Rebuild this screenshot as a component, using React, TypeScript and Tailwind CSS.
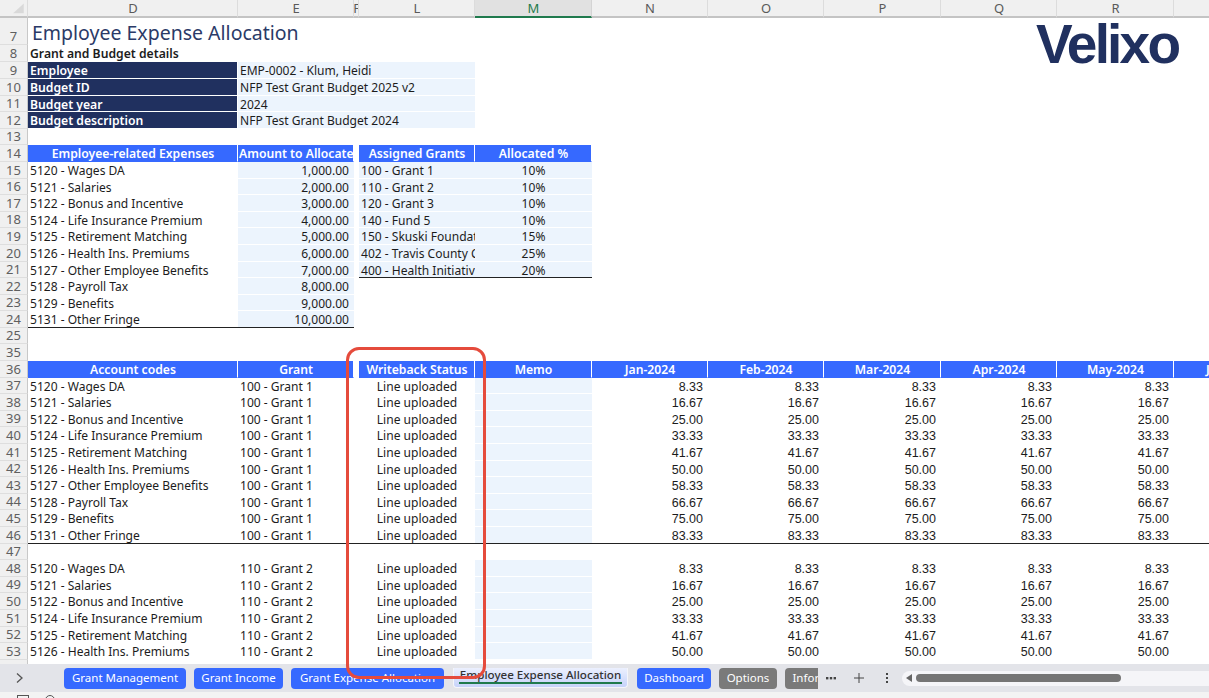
import React from "react";

const sans = "font-['Noto_Sans',sans-serif]";
const cols = { D: "w-[210px]", E: "w-[116px]", F: "w-[5px]", L: "w-[116px]", M: "w-[117px]" };
const nums = ["w-[116px]", "w-[116px]", "w-[117px]", "w-[116px]", "w-[117px]"];

function Row({ n, h = "h-[16.6px]", children }: { n?: string; h?: string; children?: React.ReactNode }) {
  return (
    <div className={`flex shrink-0 ${h}`}>
      <div className="w-[28px] shrink-0 bg-[#f0f0f0] border-r border-b border-r-[#c8c8c8] border-b-[#dedede] flex items-end justify-center text-[13px] leading-[15px] text-[#5f5f5f]">
        {n}
      </div>
      {children}
    </div>
  );
}

function C({ w, pad = "pl-[2px] pr-[2px]", line = "border-transparent", v = "pt-[2px] leading-[13.6px]", className = "", children }: { w: string; pad?: string; line?: string; v?: string; className?: string; children?: React.ReactNode }) {
  return (
    <div className={`${w} shrink-0 overflow-x-clip whitespace-nowrap border-b ${v} ${pad} ${line} ${className}`}>
      {children != null && <span className="relative z-10">{children}</span>}
    </div>
  );
}

const DARK = "border-[#222222]";
const WHITE = "border-white";
const BLUE = "border-[#3669ff]";
const navy = "bg-[#20305f] text-white font-semibold text-[12.2px]";
const light = "bg-[#ecf4fd]";
const blue = "bg-[#3669ff] text-white font-semibold text-[12.2px] text-center border-r border-r-white";
const bluePad = "pl-[1px] pr-0";

const expenses = [
  "5120 - Wages DA",
  "5121 - Salaries",
  "5122 - Bonus and Incentive",
  "5124 - Life Insurance Premium",
  "5125 - Retirement Matching",
  "5126 - Health Ins. Premiums",
  "5127 - Other Employee Benefits",
  "5128 - Payroll Tax",
  "5129 - Benefits",
  "5131 - Other Fringe",
];
const amounts = ["1,000.00", "2,000.00", "3,000.00", "4,000.00", "5,000.00", "6,000.00", "7,000.00", "8,000.00", "9,000.00", "10,000.00"];
const grants = [
  ["100 - Grant 1", "10%"],
  ["110 - Grant 2", "10%"],
  ["120 - Grant 3", "10%"],
  ["140 - Fund 5", "10%"],
  ["150 - Skuski Foundat", "15%"],
  ["402 - Travis County C", "25%"],
  ["400 - Health Initiativ", "20%"],
];
const values = ["8.33", "16.67", "25.00", "33.33", "41.67", "50.00", "58.33", "66.67", "75.00", "83.33"];
const months = ["Jan-2024", "Feb-2024", "Mar-2024", "Apr-2024", "May-2024"];

function ColHead({ w, label, active }: { w: string; label: string; active?: boolean }) {
  return (
    <div
      className={`${w} shrink-0 overflow-hidden flex items-center justify-center pl-[1px] text-[13px] leading-[15px] border-r border-b-2 ${
        active ? "bg-[#e1e1e1] border-r-[#d4d4d4] border-b-[#1f7a4d] text-[#1f7a4d]" : "border-r-[#dcdcdc] border-b-[#c4c4c4] text-[#5a5a5a]"
      }`}
    >
      {label}
    </div>
  );
}

function DetailRow({ n, label, value }: { n: string; label: string; value: string }) {
  return (
    <Row n={n}>
      <C w={cols.D} line={WHITE} className={`${navy} border-r border-r-white`}>{label}</C>
      <C w="w-[237px]" line={WHITE} className={light}>{value}</C>
    </Row>
  );
}

function LineRow({ n, name, grant, i, end }: { n: number; name: string; grant: string; i: number; end?: boolean }) {
  const rule = end ? DARK : "border-transparent";
  return (
    <Row n={String(n)}>
      <C w={cols.D} line={rule}>{name}</C>
      <C w={cols.E} line={rule}>{grant}</C>
      <C w={cols.F} line={rule} />
      <C w={cols.L} line={rule} className="text-center">Line uploaded</C>
      <C w={cols.M} line={end ? DARK : WHITE} className={light} />
      {nums.map((w, k) => (
        <C key={k} w={w} line={rule} pad="pl-[2px] pr-[5px]" v="pt-[3px] leading-[12.6px]" className="text-right text-[12.5px] font-['Liberation_Sans',sans-serif]">{values[i]}</C>
      ))}
      <C w="flex-1" line={rule} />
    </Row>
  );
}

function Tab({ label, tone = "blue", w, className = "" }: { label: string; tone?: "blue" | "gray"; w: string; className?: string }) {
  return (
    <div
      className={`${w} h-[21px] shrink-0 rounded-[4px] flex items-center justify-center overflow-hidden whitespace-nowrap text-[11.5px] leading-[14px] text-white ${
        tone === "blue" ? "bg-[#3669ff]" : "bg-[#7a7a7a]"
      } ${className}`}
    >
      {label}
    </div>
  );
}

export default function App() {
  return (
    <div className={`relative w-[1209px] h-[698px] overflow-hidden bg-white flex flex-col text-[12.05px] text-[#1c1c1c] ${sans}`}>
      {/* column letters */}
      <div className="flex h-[18px] shrink-0 bg-[#f0f0f0]">
        <div className="w-[28px] shrink-0 border-r border-b-2 border-r-[#dcdcdc] border-b-[#c4c4c4]">
          <svg viewBox="0 0 28 18" className="w-[28px] h-[16px]">
            <polygon points="13,15 25,15 25,4" fill="#d9d9d9" />
          </svg>
        </div>
        <ColHead w={cols.D} label="D" />
        <ColHead w={cols.E} label="E" />
        <ColHead w={cols.F} label="F" />
        <ColHead w={cols.L} label="L" />
        <ColHead w={cols.M} label="M" active />
        <ColHead w={nums[0]} label="N" />
        <ColHead w={nums[1]} label="O" />
        <ColHead w={nums[2]} label="P" />
        <ColHead w={nums[3]} label="Q" />
        <ColHead w={nums[4]} label="R" />
        <div className="flex-1 border-b-2 border-b-[#c4c4c4]" />
      </div>

      {/* sheet rows */}
      <div className="flex-1 min-h-0 overflow-hidden flex flex-col">
        <Row n="7" h="h-[27px]">
          <div className="px-[4px] pt-[2px] text-[19.5px] leading-[25px] text-[#2b3a67] whitespace-nowrap">Employee Expense Allocation</div>
        </Row>
        <Row n="8" h="h-[17.4px]">
          <C w={cols.D} className="font-semibold text-[12.2px]">Grant and Budget details</C>
        </Row>
        <DetailRow n="9" label="Employee" value="EMP-0002 - Klum, Heidi" />
        <DetailRow n="10" label="Budget ID" value="NFP Test Grant Budget 2025 v2" />
        <DetailRow n="11" label="Budget year" value="2024" />
        <DetailRow n="12" label="Budget description" value="NFP Test Grant Budget 2024" />
        <Row n="13" />
        <Row n="14">
          <C w={cols.D} pad={bluePad} line={BLUE} className={blue}>Employee-related Expenses</C>
          <C w={cols.E} pad={bluePad} line={BLUE} className={blue}>Amount to Allocate</C>
          <C w={cols.F} />
          <C w={cols.L} pad={bluePad} line={BLUE} className={blue}>Assigned Grants</C>
          <C w={cols.M} pad={bluePad} line={BLUE} className={blue}>Allocated %</C>
        </Row>
        {expenses.map((name, i) => {
          const g = grants[i];
          const lastE = i === 9;
          const lastG = i === 6;
          return (
            <Row key={name} n={String(15 + i)}>
              <C w={cols.D} line={lastE ? DARK : "border-transparent"}>{name}</C>
              <C w={cols.E} pad="pl-[2px] pr-[5px]" line={lastE ? DARK : WHITE} className={`${light} text-right`}>{amounts[i]}</C>
              <C w={cols.F} />
              {g && (
                <>
                  <C w={cols.L} line={lastG ? DARK : WHITE} className={light}>{g[0]}</C>
                  <C w={cols.M} line={lastG ? DARK : WHITE} className={`${light} text-center`}>{g[1]}</C>
                </>
              )}
            </Row>
          );
        })}
        <Row n="25" />
        <Row n="35" />
        <Row n="36">
          <C w={cols.D} pad={bluePad} line={BLUE} className={blue}>Account codes</C>
          <C w={cols.E} pad={bluePad} line={BLUE} className={blue}>Grant</C>
          <C w={cols.F} />
          <C w={cols.L} pad={bluePad} line={BLUE} className={blue}>Writeback Status</C>
          <C w={cols.M} pad={bluePad} line={BLUE} className={blue}>Memo</C>
          {months.map((m, k) => (
            <C key={m} w={nums[k]} pad={bluePad} line={BLUE} className={blue}>{m}</C>
          ))}
          <C w="flex-1" pad="pl-[32px] pr-0" line={BLUE} className="bg-[#3669ff] text-white font-semibold text-[12.2px]">Jun-2024</C>
        </Row>
        {expenses.map((name, i) => (
          <LineRow key={name} n={37 + i} name={name} grant="100 - Grant 1" i={i} end={i === 9} />
        ))}
        <Row n="47" />
        {expenses.slice(0, 6).map((name, i) => (
          <LineRow key={name} n={48 + i} name={name} grant="110 - Grant 2" i={i} />
        ))}
        <Row n="" />
      </div>

      {/* sheet tabs */}
      <div className="relative z-20 h-[28px] shrink-0 bg-[#e3e4e9] flex items-center">
        <div className="w-[64px] shrink-0 flex pl-[14px]">
          <svg viewBox="0 0 10 12" className="w-[10px] h-[12px]" fill="none" stroke="#555555" strokeWidth="1.3">
            <path d="M3 1.5 8 6l-5 4.5" />
          </svg>
        </div>
        <div className="w-[754px] shrink-0 overflow-hidden flex items-center gap-[8px]">
          <Tab label="Grant Management" w="w-[122px]" />
          <Tab label="Grant Income" w="w-[89px]" />
          <Tab label="Grant Expense Allocation" w="w-[153px]" />
          <div className="ml-[1px] w-[175px] h-[24px] -mt-[4px] shrink-0 rounded-b-[4px] bg-gradient-to-b from-[#f4f6ff] to-[#c6d3fa] border border-t-0 border-[#f4f5fa] flex flex-col items-center justify-end pb-[3px] whitespace-nowrap text-[11.6px] leading-[15px] font-medium text-[#333333]">
            <span>Employee Expense Allocation</span>
            <span className="w-[163px] h-[2px] bg-[#1f7a4d]" />
          </div>
          <Tab label="Dashboard" w="w-[74px]" className="ml-[1px]" />
          <Tab label="Options" tone="gray" w="w-[58px]" />
          <Tab label="Information" tone="gray" w="w-[80px]" />
        </div>
        <div className="w-[84px] shrink-0 flex items-center">
          <svg viewBox="0 0 12 12" className="w-[12px] h-[12px] ml-[7px]" fill="#444444">
            <rect x="1" y="5" width="2.4" height="2.4" />
            <rect x="4.8" y="5" width="2.4" height="2.4" />
            <rect x="8.6" y="5" width="2.4" height="2.4" />
          </svg>
          <svg viewBox="0 0 12 12" className="w-[12px] h-[12px] ml-[16px]" fill="none" stroke="#444444" strokeWidth="1">
            <path d="M6 1v10M1 6h10" />
          </svg>
          <svg viewBox="0 0 12 12" className="w-[12px] h-[12px] ml-[16px]" fill="#444444">
            <rect x="5" y="1" width="2" height="2" />
            <rect x="5" y="5" width="2" height="2" />
            <rect x="5" y="9" width="2" height="2" />
          </svg>
        </div>
        <div className="flex-1 h-[15px] bg-[#f5f5f8] rounded-l-full flex items-center pl-[4px] gap-[4px]">
          <svg viewBox="0 0 6 8" className="w-[6px] h-[8px]" fill="#666666">
            <path d="M6 0v8L0 4z" />
          </svg>
          <div className="w-[205px] h-[8px] rounded-full bg-[#757575]" />
        </div>
      </div>
      {/* status bar */}
      <div className="h-[6px] shrink-0 bg-[#f3f3f3] overflow-hidden relative">
        <div className="absolute left-[17px] top-[3px] w-[12px] h-[10px] border border-[#555555]" />
        <div className="absolute left-[45px] top-[3px] w-[10px] h-[10px] border border-[#555555] rounded-t-full" />
      </div>

      {/* logo */}
      <div className="absolute left-[1036px] top-[24px] text-[55px] leading-[40px] font-bold tracking-[-2.8px] text-[#20305f] font-['Liberation_Sans',sans-serif]">
        Velixo
      </div>
      {/* red callout */}
      <div className="absolute z-30 left-[346px] top-[347px] w-[140px] h-[332px] border-[3.5px] border-[#e54b3c] rounded-[13px] pointer-events-none" />
    </div>
  );
}
